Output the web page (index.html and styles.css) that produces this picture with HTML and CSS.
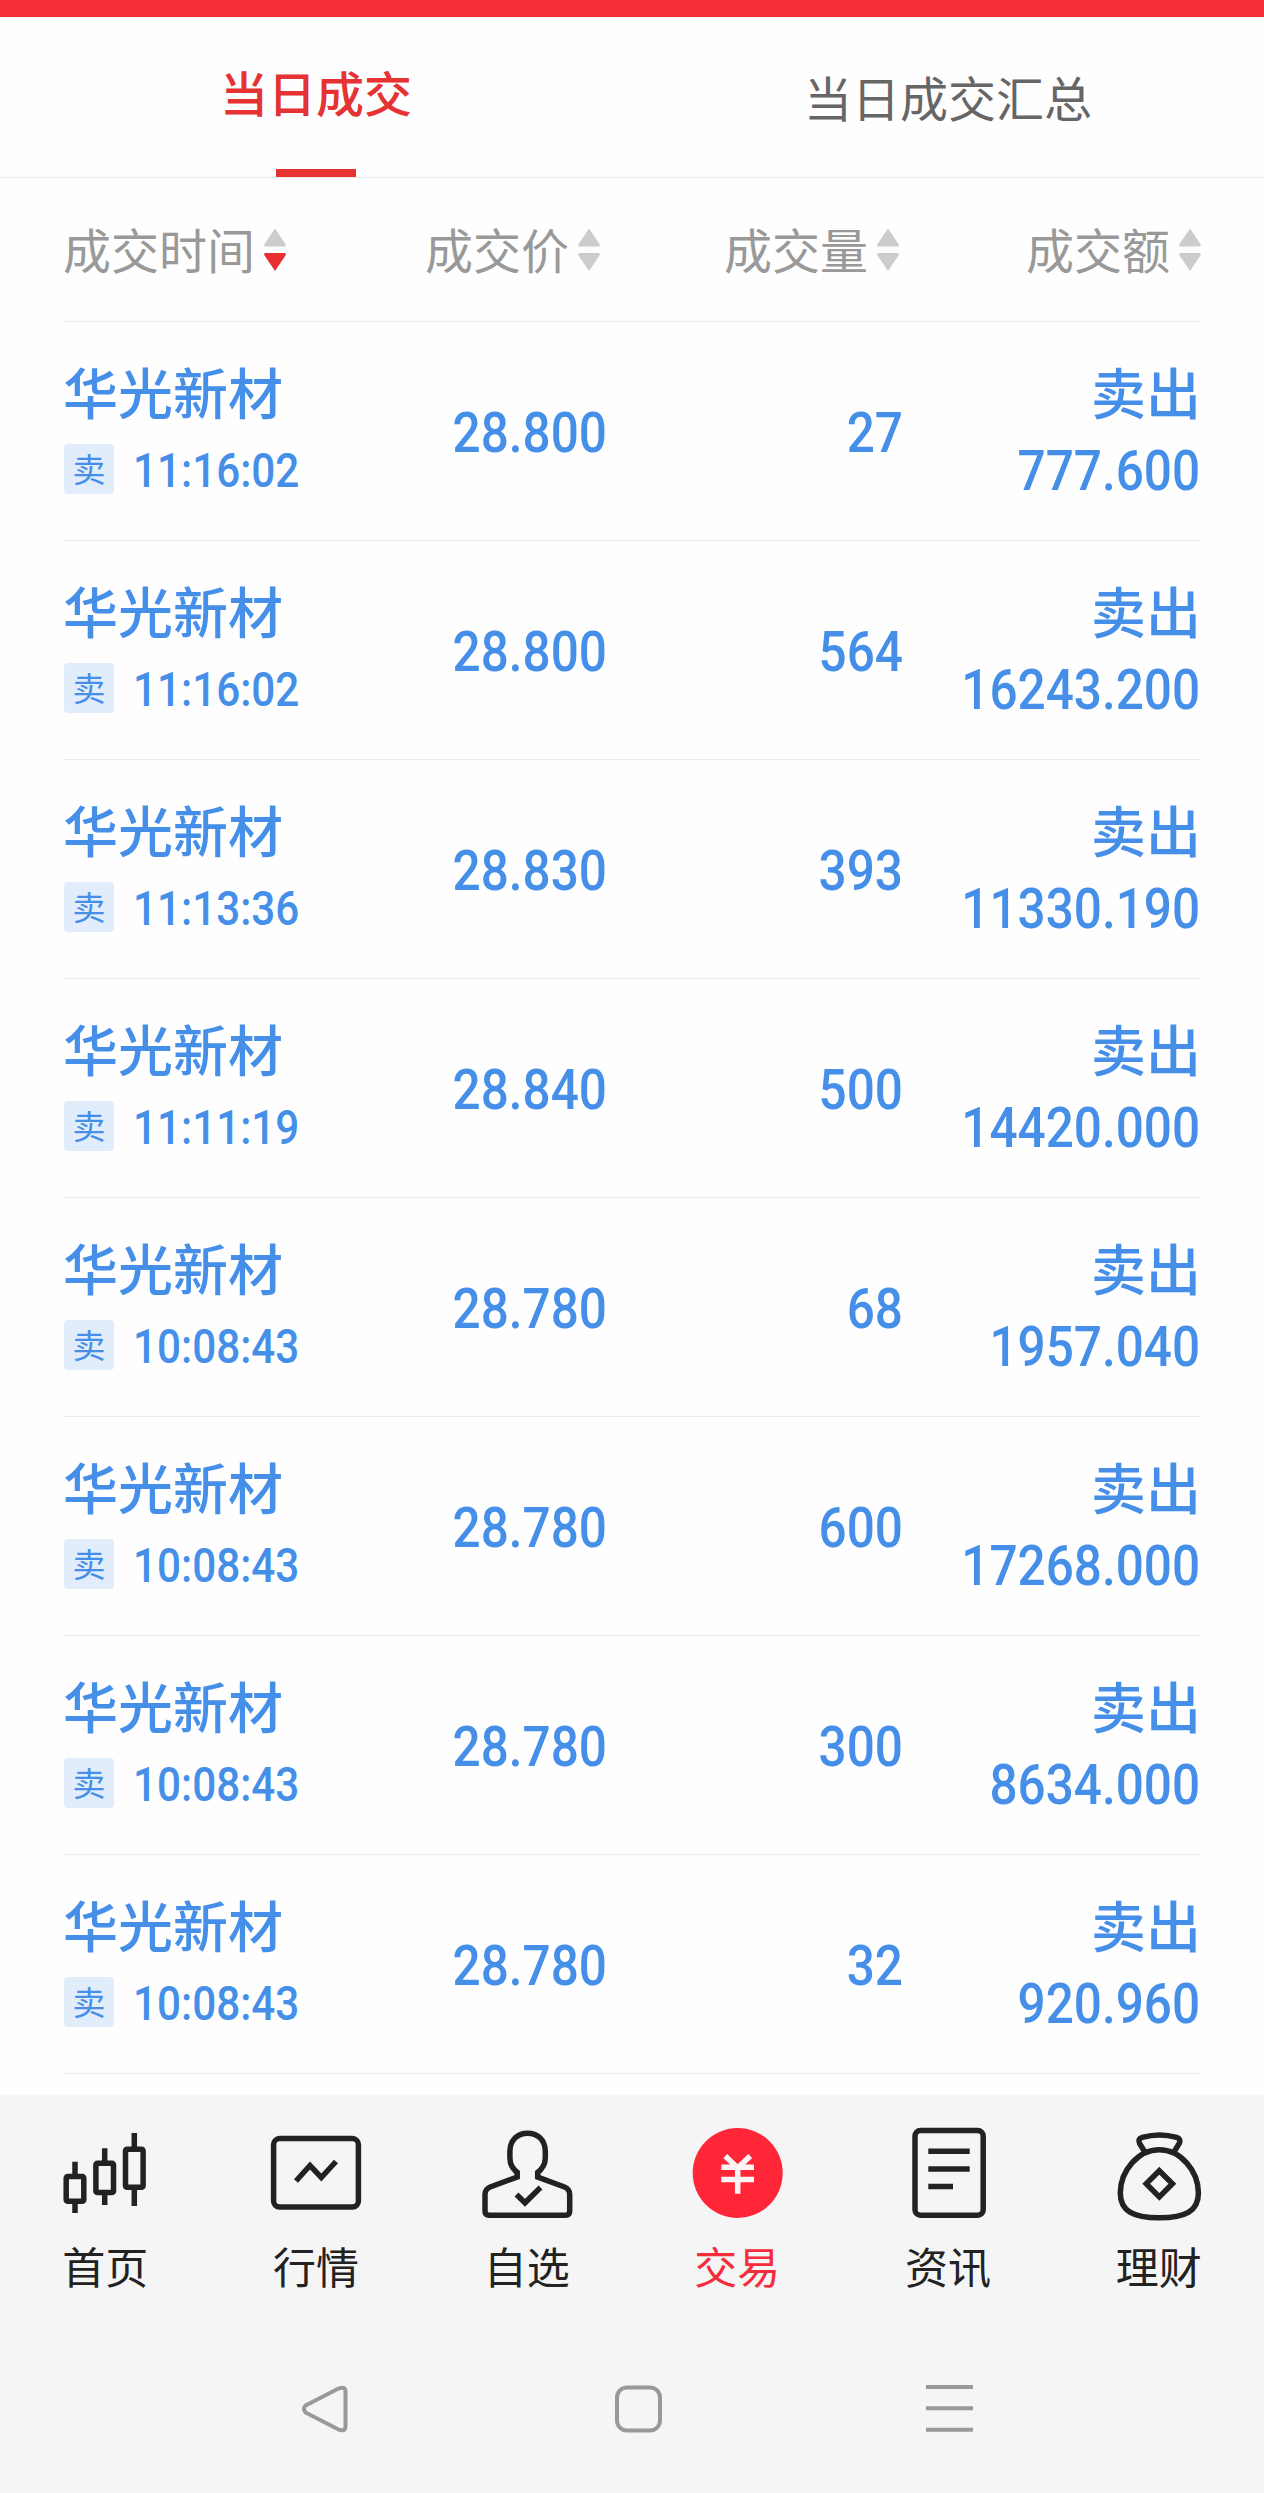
FILE: index.html
```html
<!DOCTYPE html>
<html lang="zh-CN">
<head>
<meta charset="utf-8"/>
<meta content="width=device-width, initial-scale=1.0" name="viewport"/>
<title>当日成交</title>
<link rel="stylesheet" href="styles.css">
</head>
<body>
<div class="status-bar"></div>
<div class="tabs">
  <div class="tab active"><span>当日成交</span></div>
  <div class="tab"><span>当日成交汇总</span></div>
</div>
<main class="deals">
  <div class="deal-head">
    <div class="sort down">成交时间<i></i></div>
    <div class="sort">成交价<i></i></div>
    <div class="sort">成交量<i></i></div>
    <div class="sort">成交额<i></i></div>
  </div>
  <div id="list"></div>
</main>
<nav class="tabbar">
  <a class="item">
    <svg viewBox="0 0 100 100">
      <rect x="11.2" y="51.5" width="17.6" height="24.7" rx="1.5"/>
      <rect x="40.9" y="38.2" width="17.6" height="29.3" rx="1.5"/>
      <rect x="70.5" y="24.2" width="17.6" height="38" rx="1.5"/>
      <path d="M20 36.7V51M20 77V88M49.7 23.3V37M49.7 68V80M79.3 8V24M79.3 63V81"/>
    </svg>
    <span>首页</span>
  </a>
  <a class="item">
    <svg viewBox="0 0 100 100">
      <rect x="7.6" y="13.6" width="84.8" height="68.5" rx="6"/>
      <path d="M30 56L44 40.5L55.3 52.5L70 36.5"/>
    </svg>
    <span>行情</span>
  </a>
  <a class="item">
    <svg viewBox="0 0 100 100">
      <path d="M40.2 45.7V52L13.2 62Q8 64 8 69.5V86Q8 90.2 12 90.2H88.7Q92.7 90.2 92.7 86V69.5Q92.7 64 87.5 62L60.7 52V45.7"/>
      <path d="M41 48C35.5 44 32.9 39 32.9 33V26C33.2 14.5 41 8.2 50.6 8.2S68 14.5 68.3 26V33C68.3 39 65.5 44 60 48"/>
      <path d="M39.5 69.5L48 77.8L63.5 62.5"/>
    </svg>
    <span>自选</span>
  </a>
  <a class="item active">
    <svg viewBox="0 0 100 100">
      <circle class="disc" cx="50.7" cy="48" r="45"/>
      <path d="M38.2 31L50.7 43L63.2 31M34.3 42.3H67M34.3 54.5H67M50.7 42V68.7"/>
    </svg>
    <span>交易</span>
  </a>
  <a class="item">
    <svg viewBox="0 0 100 100">
      <rect x="17" y="5.6" width="68.2" height="84.6" rx="5.5"/>
      <path d="M30.3 26.3H71.7M30.3 44H71.7M30.3 61.4H55"/>
    </svg>
    <span>资讯</span>
  </a>
  <a class="item">
    <svg viewBox="0 0 100 100">
      <path d="M50.3 24.8C29 24.8 11.3 46 11.3 68C11.3 86 24 92.8 50.3 92.8S89.4 86 89.4 68C89.4 46 71.6 24.8 50.3 24.8Z"/>
      <path d="M35.8 27L30.6 18.5Q28.3 14 33.3 12.4C44 9.3 57 9.3 67.6 12.4Q72.5 14 70.2 18.5L65 27"/>
      <path d="M50.3 45.7L63.4 58.8L50.3 71.9L37.2 58.8Z"/>
    </svg>
    <span>理财</span>
  </a>
</nav>
<div class="system-bar">
  <svg viewBox="0 0 48 48"><path d="M4.5 20.5L38 3.3Q44.5 1 44.5 7V41Q44.5 47 38 44.7L4.5 27.5Q1.5 24 4.5 20.5Z"/></svg>
  <svg viewBox="0 0 48 48"><rect x="3" y="2.5" width="43" height="43" rx="10"/></svg>
  <svg viewBox="0 0 48 48"><path d="M0 2H47M0 23.3H47M0 44.8H47"/></svg>
</div>
<script>
  const deals = [
    { time: '11:16:02', price: '28.800', count: '27', amount: '777.600' },
    { time: '11:16:02', price: '28.800', count: '564', amount: '16243.200' },
    { time: '11:13:36', price: '28.830', count: '393', amount: '11330.190' },
    { time: '11:11:19', price: '28.840', count: '500', amount: '14420.000' },
    { time: '10:08:43', price: '28.780', count: '68', amount: '1957.040' },
    { time: '10:08:43', price: '28.780', count: '600', amount: '17268.000' },
    { time: '10:08:43', price: '28.780', count: '300', amount: '8634.000' },
    { time: '10:08:43', price: '28.780', count: '32', amount: '920.960' }
  ];
  document.getElementById('list').innerHTML = deals
    .map(
      (d) => `
      <div class="deal">
        <div class="stock">
          <div class="name">华光新材</div>
          <div class="when"><span class="badge">卖</span><span class="time">${d.time}</span></div>
        </div>
        <div class="num">${d.price}</div>
        <div class="num">${d.count}</div>
        <div class="total">
          <div class="name">卖出</div>
          <div class="num">${d.amount}</div>
        </div>
      </div>`
    )
    .join('');
</script>
</body>
</html>
```

FILE: styles.css
```css
* {
  box-sizing: border-box;
}
body {
  margin: 0;
  height: 2493px;
  display: flex;
  flex-direction: column;
  background: #fefefe;
  font-family: "Noto Sans CJK SC", sans-serif;
  overflow: hidden;
}
.status-bar {
  height: 17px;
  background: #f42f37;
}
.tabs {
  display: flex;
  height: 161px;
  border-bottom: 1px solid #ebebeb;
}
.tab {
  flex: 1;
  display: flex;
  flex-direction: column;
  align-items: center;
  padding-top: 44px;
  font-size: 48px;
  line-height: 70px;
  color: #666;
}
.tab.active {
  padding-top: 39px;
  font-weight: 500;
  color: #e53232;
}
.tab.active::after {
  content: "";
  width: 80px;
  height: 8px;
  margin-top: auto;
  background: #e53232;
}
.deals {
  height: 1917px;
  padding: 0 63px;
}
.deal-head,
.deal {
  display: grid;
  grid-template-columns: 223px 321px 296px 298px;
  border-bottom: 1px solid #ebebeb;
}
.deal-head {
  height: 144px;
  align-items: center;
  padding-bottom: 3px;
}
.sort {
  display: flex;
  align-items: center;
  justify-content: flex-end;
  gap: 9px;
  font-size: 48px;
  line-height: 70px;
  color: #999;
}
.sort:nth-child(2) {
  padding-right: 7px;
}
.sort:nth-child(3) {
  padding-right: 4px;
}
.sort i {
  padding-top: 3px;
}
.sort i::before,
.sort i::after {
  content: "";
  display: block;
  width: 22px;
  height: 18px;
  background: #ccc;
  clip-path: polygon(50% 0, 100% 90%, 96% 100%, 4% 100%, 0 90%);
}
.sort i::after {
  margin-top: 6px;
  transform: scaleY(-1);
}
.sort.down i::after {
  background: #e83030;
}
.deal {
  height: 219px;
  align-items: center;
  color: #468fe8;
}
.name {
  font-size: 55px;
  font-weight: 500;
  line-height: 72px;
  white-space: nowrap;
}
.when {
  display: flex;
  align-items: center;
  gap: 19px;
  height: 82px;
  padding: 4px 0 0 1px;
}
.badge {
  flex: none;
  width: 50px;
  height: 50px;
  border-radius: 4px;
  background: #e2edfb;
  font-size: 33px;
  line-height: 48px;
  text-align: center;
}
/* narrow figures */
.time,
.num {
  font-family: Roboto, sans-serif;
  font-weight: 500;
  transform: scaleX(.9);
}
.time {
  padding-top: 2px;
  font-size: 48px;
  transform: scaleX(.88);
  transform-origin: left;
}
.num {
  padding-top: 4px;
  font-size: 55px;
  line-height: 78px;
  text-align: right;
  transform-origin: right;
}
.total .name {
  text-align: right;
}
.total .num {
  padding: 8px 1px 0 0;
  line-height: 74px;
}
.tabbar {
  display: flex;
  height: 238px;
  padding-top: 30px;
  background: #f5f5f5;
}
.item {
  flex: 1;
  display: flex;
  flex-direction: column;
  align-items: center;
  font-size: 43px;
  line-height: 62px;
  color: #222;
}
.item span {
  margin-top: 9px;
}
.item.active {
  color: #f42c3c;
}
.item svg {
  width: 100px;
  height: 100px;
}
.item svg * {
  fill: none;
  stroke: #222;
  stroke-width: 5.5;
}
.item.active svg path {
  stroke: #fff4f5;
}
.item.active svg .disc {
  fill: #ff2737;
  stroke: none;
}
.system-bar {
  flex: 1;
  display: flex;
  justify-content: space-between;
  padding: 52px 290px 0 301px;
  background: #f5f5f5;
}
.system-bar svg {
  width: 48px;
  height: 48px;
  fill: none;
  stroke: #999;
  stroke-width: 4;
}
```
